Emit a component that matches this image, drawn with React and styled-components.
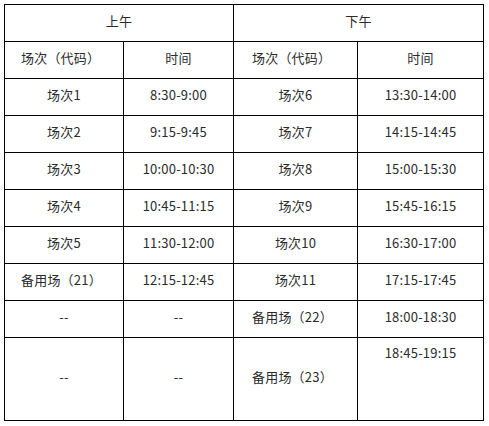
import styled, { createGlobalStyle } from "styled-components";

const GlobalStyle = createGlobalStyle`
  html, body {
    margin: 0;
    padding: 0;
    background: #fff;
  }
  body {
    font-family: "Noto Sans CJK SC", "Noto Sans", sans-serif;
  }
`;

const Page = styled.div`
  padding: 4px 0 0 4px;
`;

const Table = styled.table`
  border-collapse: collapse;
  table-layout: fixed;
  width: 480px;
  font-size: 13px;
  color: #2b2b2b;
`;

const Row = styled.tr`
  height: ${(p) => (p.$tall ? 83 : 37)}px;
`;

const Cell = styled.td`
  border: 1px solid #000;
  padding: ${(p) => (p.$top ? "5px 0 0" : "0 0 5px")};
  padding-left: ${(p) => (p.$left ? `${p.$left}px` : "0")};
  text-align: ${(p) => (p.$left ? "left" : "center")};
  vertical-align: ${(p) => (p.$top ? "top" : "middle")};
  line-height: 20px;
  letter-spacing: 0.2px;
  white-space: nowrap;
`;

const morning = [
  ["场次1", "8:30-9:00"],
  ["场次2", "9:15-9:45"],
  ["场次3", "10:00-10:30"],
  ["场次4", "10:45-11:15"],
  ["场次5", "11:30-12:00"],
  ["备用场（21）", "12:15-12:45"],
];

const afternoon = [
  ["场次6", "13:30-14:00"],
  ["场次7", "14:15-14:45"],
  ["场次8", "15:00-15:30"],
  ["场次9", "15:45-16:15"],
  ["场次10", "16:30-17:00"],
  ["场次11", "17:15-17:45"],
];

export default function App() {
  return (
    <>
      <GlobalStyle />
      <Page>
        <Table>
          <colgroup>
            <col style={{ width: 119 }} />
            <col style={{ width: 110 }} />
            <col style={{ width: 124 }} />
            <col style={{ width: 126 }} />
          </colgroup>
          <tbody>
            <Row>
              <Cell colSpan={2}>上午</Cell>
              <Cell colSpan={2}>下午</Cell>
            </Row>
            <Row>
              <Cell $left={16}>场次（代码）</Cell>
              <Cell>时间</Cell>
              <Cell $left={18}>场次（代码）</Cell>
              <Cell>时间</Cell>
            </Row>
            {morning.map((m, i) => (
              <Row key={m[0]}>
                <Cell $left={m[0].startsWith("备") ? 16 : 0}>{m[0]}</Cell>
                <Cell>{m[1]}</Cell>
                <Cell>{afternoon[i][0]}</Cell>
                <Cell>{afternoon[i][1]}</Cell>
              </Row>
            ))}
            <Row>
              <Cell>--</Cell>
              <Cell>--</Cell>
              <Cell $left={18}>备用场（22）</Cell>
              <Cell>18:00-18:30</Cell>
            </Row>
            <Row $tall>
              <Cell>--</Cell>
              <Cell>--</Cell>
              <Cell $left={18}>备用场（23）</Cell>
              <Cell $top>18:45-19:15</Cell>
            </Row>
          </tbody>
        </Table>
      </Page>
    </>
  );
}
